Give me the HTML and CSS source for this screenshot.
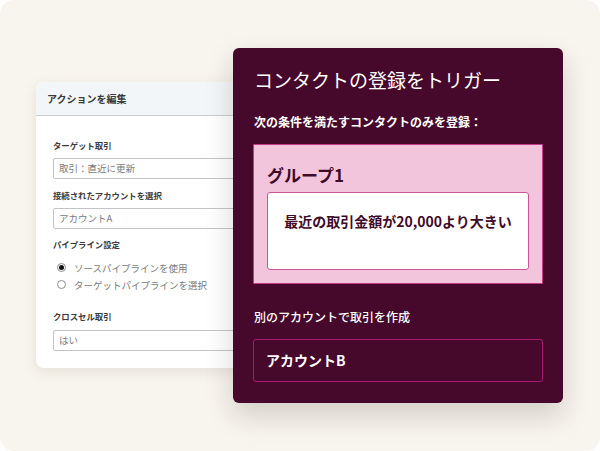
FILE: index.html
```html
<!DOCTYPE html>
<html lang="ja">
<head>
<meta charset="utf-8">
<link rel="stylesheet" href="styles.css">
</head>
<body>
<div class="stage">
  <div class="edit-card">
    <div class="edit-header">アクションを編集</div>
    <div class="edit-body">
      <div class="label">ターゲット取引</div>
      <div class="input">取引：直近に更新</div>
      <div class="label gap1">接続されたアカウントを選択</div>
      <div class="input">アカウントA</div>
      <div class="label gap2">パイプライン設定</div>
      <div class="radios">
        <div class="radio-row"><span class="radio checked"></span>ソースパイプラインを使用</div>
        <div class="radio-row"><span class="radio"></span>ターゲットパイプラインを選択</div>
      </div>
      <div class="label gap3">クロスセル取引</div>
      <div class="input">はい</div>
    </div>
  </div>

  <div class="trigger-card">
    <div class="trigger-title">コンタクトの登録をトリガー</div>
    <div class="trigger-sub">次の条件を満たすコンタクトのみを登録：</div>
    <div class="group-box">
      <div class="group-title">グループ1</div>
      <div class="condition">最近の取引金額が20,000より大きい</div>
    </div>
    <div class="trigger-sub2">別のアカウントで取引を作成</div>
    <div class="account-box">アカウントB</div>
  </div>
</div>
</body>
</html>
```

FILE: styles.css
```css
html, body {
  margin: 0;
  padding: 0;
  background: #ffffff;
}
body {
  font-family: "Noto Sans CJK JP", "Noto Sans", sans-serif;
}
.stage {
  position: relative;
  width: 600px;
  height: 451px;
  background: #f8f5ee;
  border-radius: 14px;
  overflow: hidden;
  padding: 82px 0 0 36px;
  box-sizing: border-box;
}
.edit-card {
  width: 232px;
  height: 286px;
  background: #ffffff;
  border-radius: 8px;
  box-shadow: 0 4px 14px rgba(60, 50, 30, 0.10);
  overflow: hidden;
}
.edit-header {
  height: 34px;
  box-sizing: border-box;
  background: #f3f6f8;
  border-bottom: 1px solid #c9cdd0;
  padding-left: 11px;
  font-size: 10px;
  font-weight: 700;
  color: #3a3a3a;
  line-height: 33px;
}
.edit-body {
  padding: 23px 0 0 17px;
}
.label {
  font-size: 8.4px;
  font-weight: 700;
  color: #3b3b3b;
  line-height: 12px;
  margin-bottom: 7px;
}
.gap1 { margin-top: 10px; }
.gap2 { margin-top: 9px; }
.gap3 { margin-top: 17px; margin-bottom: 8px; }
.input {
  height: 21px;
  box-sizing: border-box;
  border: 1px solid #c4c4c4;
  border-radius: 2px;
  padding-left: 5px;
  font-size: 9.5px;
  line-height: 19px;
  color: #7a7a7a;
  width: 240px;
}
.radios {
  margin-top: 9px;
  padding-left: 4px;
}
.radio-row {
  display: flex;
  align-items: center;
  height: 17px;
  font-size: 9.5px;
  color: #7a7a7a;
}
.radio {
  width: 9px;
  height: 9px;
  box-sizing: border-box;
  border: 1px solid #8d8d8d;
  border-radius: 50%;
  margin-right: 8px;
  display: flex;
  align-items: center;
  justify-content: center;
  background: #fff;
}
.radio.checked::after {
  content: "";
  width: 5px;
  height: 5px;
  border-radius: 50%;
  background: #111;
}

.trigger-card {
  position: absolute;
  left: 233px;
  top: 48px;
  width: 330px;
  height: 355px;
  box-sizing: border-box;
  background: #46092b;
  border-radius: 6px;
  box-shadow: 0 12px 28px rgba(40, 20, 20, 0.18);
  padding: 20px 20px 0 20px;
  color: #ffffff;
}
.trigger-title {
  font-size: 19px;
  line-height: 24px;
  font-weight: 400;
  padding-left: 1px;
}
.trigger-sub {
  margin-top: 22px;
  font-size: 12px;
  line-height: 16px;
  font-weight: 700;
  padding-left: 1px;
}
.group-box {
  margin-top: 14px;
  height: 140px;
  box-sizing: border-box;
  background: #f3c5dc;
  border: 1px solid #c63b88;
  border-radius: 1px;
  padding: 19px 13px 0 13px;
}
.group-title {
  font-size: 17px;
  line-height: 22px;
  font-weight: 700;
  color: #3f0b28;
}
.condition {
  margin-top: 6px;
  height: 78px;
  box-sizing: border-box;
  background: #ffffff;
  border: 1px solid #c9559b;
  border-radius: 3px;
  padding-top: 19px;
  text-align: center;
  font-size: 14px;
  line-height: 18px;
  font-weight: 700;
  color: #3f0b28;
}
.trigger-sub2 {
  margin-top: 25px;
  font-size: 12px;
  line-height: 16px;
  font-weight: 500;
  padding-left: 1px;
}
.account-box {
  margin-top: 14px;
  height: 43px;
  box-sizing: border-box;
  border: 1px solid #a91a70;
  border-radius: 3px;
  padding-left: 12px;
  font-size: 14px;
  line-height: 41px;
  font-weight: 700;
}
```
